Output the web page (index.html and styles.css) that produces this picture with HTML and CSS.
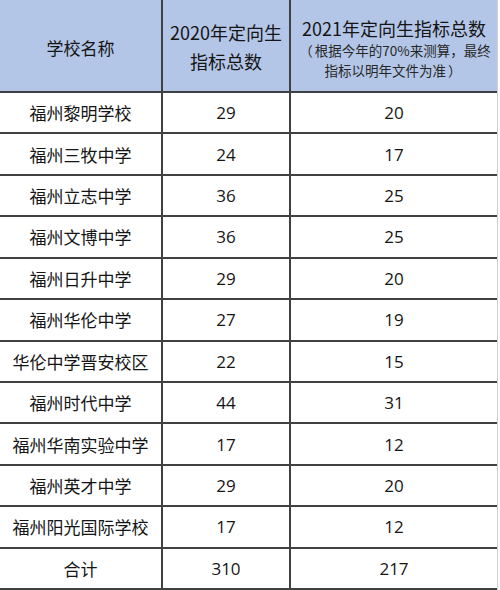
FILE: index.html
```html
<!DOCTYPE html>
<html lang="zh-CN">
<head>
<meta charset="utf-8">
<link rel="stylesheet" href="styles.css">
</head>
<body>
<div class="sheet">
  <div class="cell head">学校名称</div>
  <div class="cell head head2">2020年定向生<br>指标总数</div>
  <div class="cell head head3"><div class="big">2021年定向生指标总数</div><div class="small"><span class="paren">（</span>根据今年的70%来测算，最终<br>指标以明年文件为准<span class="paren">）</span></div></div>

  <div class="cell name">福州黎明学校</div><div class="cell num">29</div><div class="cell num">20</div>
  <div class="cell name">福州三牧中学</div><div class="cell num">24</div><div class="cell num">17</div>
  <div class="cell name">福州立志中学</div><div class="cell num">36</div><div class="cell num">25</div>
  <div class="cell name">福州文博中学</div><div class="cell num">36</div><div class="cell num">25</div>
  <div class="cell name">福州日升中学</div><div class="cell num">29</div><div class="cell num">20</div>
  <div class="cell name">福州华伦中学</div><div class="cell num">27</div><div class="cell num">19</div>
  <div class="cell name">华伦中学晋安校区</div><div class="cell num">22</div><div class="cell num">15</div>
  <div class="cell name">福州时代中学</div><div class="cell num">44</div><div class="cell num">31</div>
  <div class="cell name">福州华南实验中学</div><div class="cell num">17</div><div class="cell num">12</div>
  <div class="cell name">福州英才中学</div><div class="cell num">29</div><div class="cell num">20</div>
  <div class="cell name">福州阳光国际学校</div><div class="cell num">17</div><div class="cell num">12</div>
  <div class="cell name">合计</div><div class="cell num">310</div><div class="cell num">217</div>
</div>
</body>
</html>
```
FILE: styles.css
```css
html, body {
  margin: 0;
  padding: 0;
  background: #ffffff;
}
.sheet {
  width: 498px;
  height: 590px;
  display: grid;
  grid-template-columns: 163px 128px 1fr;
  grid-template-rows: 93px repeat(12, 1fr);
  border-right: 1px solid #d0d0d0;
  font-family: "Noto Sans CJK SC", "Noto Sans", sans-serif;
  color: #151515;
  box-sizing: border-box;
}
.cell {
  display: flex;
  align-items: center;
  justify-content: center;
  text-align: center;
  border-right: 2px solid #404040;
  border-bottom: 2px solid #404040;
  font-size: 17px;
  box-sizing: border-box;
}
.cell:nth-child(3n) {
  border-right: none;
}
.head {
  background: #b4c6e7;
  font-size: 17px;
  padding-top: 3px;
}
.head2 {
  line-height: 29px;
  font-size: 18px;
}
.head3 {
  flex-direction: column;
  padding-top: 5px;
}
.big {
  font-size: 18px;
  line-height: 24px;
}
.small {
  font-size: 13.5px;
  line-height: 20px;
  color: #262626;
}
.paren {
  display: inline-block;
  width: 1.3em;
  text-align: center;
}
.num {
  font-family: "Open Sans", "Noto Sans", sans-serif;
  font-size: 17px;
}
```
